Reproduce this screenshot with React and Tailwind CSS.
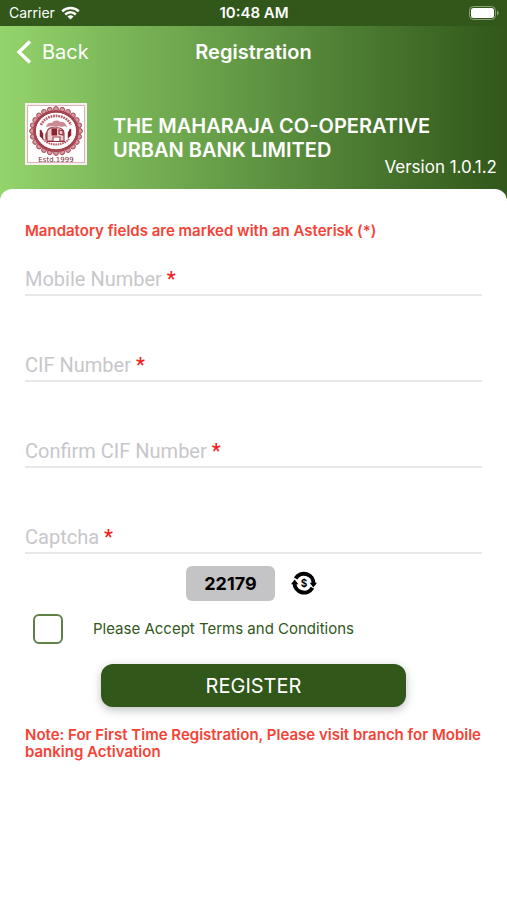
import React, { useState } from 'react';

const fields = [
  { id: 'mobile', label: 'Mobile Number', type: 'tel' },
  { id: 'cif', label: 'CIF Number', type: 'text' },
  { id: 'confirmCif', label: 'Confirm CIF Number', type: 'text' },
  { id: 'captcha', label: 'Captcha', type: 'text' },
];

const petals = Array.from({ length: 24 }, (_, i) => {
  const angle = (i * Math.PI) / 12;
  return { x: 31 + Math.cos(angle) * 24, y: 28 + Math.sin(angle) * 22 };
});

const StatusBar = () => (
  <div className="grid h-[26px] grid-cols-3 items-center bg-[#31571a] pr-2 pl-[9px] text-white">
    <div className="flex items-center gap-[6px]">
      <span className="text-sm">Carrier</span>
      <svg width="19" height="14" viewBox="0 0 19 14" fill="none" stroke="white" strokeWidth="2.5">
        <path d="M1.2 5.4a12 12 0 0 1 16.6 0" />
        <path d="M4.2 8.5a7.6 7.6 0 0 1 10.6 0" />
        <path d="M9.5 13.6l-3-3a4.2 4.2 0 0 1 6 0z" fill="white" stroke="none" />
      </svg>
    </div>
    <span className="text-center text-[15px] leading-5 font-semibold">10:48 AM</span>
    <svg className="justify-self-end" width="30" height="15" viewBox="0 0 30 15">
      <rect x="0.5" y="0.5" width="26" height="13" rx="4" fill="none" stroke="#8ba37c" />
      <rect x="2" y="2" width="23" height="10" rx="2.5" fill="white" />
      <path d="M28 4.7c2.2 1 2.2 3.8 0 4.8z" fill="#8ba37c" />
    </svg>
  </div>
);

const BankLogo = () => (
  <svg className="shrink-0" width="62" height="62" viewBox="0 0 62 62" role="img" aria-label="Bank logo">
    <rect width="62" height="62" fill="#f7eeee" />
    <rect x="2.5" y="2.5" width="57" height="57" fill="white" stroke="#d9b3b7" />
    {petals.map((p, i) => (
      <circle key={i} cx={p.x} cy={p.y} r="2.4" fill="#d49ba1" stroke="#a5444f" strokeWidth="1" />
    ))}
    <ellipse cx="31" cy="28" rx="21.4" ry="19.6" fill="white" stroke="#a5444f" strokeWidth="3" />
    <ellipse cx="31" cy="28" rx="20" ry="18.2" fill="white" />
    <path d="M16 22a16 14 0 0 1 30 0" fill="none" stroke="#b4606a" strokeWidth="2.6" strokeDasharray="1.8 0.8" />
    <path d="M18 36a15 11 0 0 0 26 0" fill="none" stroke="#b4606a" strokeWidth="2" strokeDasharray="1.6 0.7" />
    <path d="M21 24c1-4 4-5 6-4 2-3 6-3 8-1 3-1 6 1 7 5-2-1-4-1-5 0-2-1-4-1-6 0-3-1-7-1-10 0z" fill="#c98a91" />
    <path d="M22 38v-9c1-4 4-5 8-4 5-1 9 1 9 6v7h-4v-4h-7v4zM22 29c-2 2-1 5-1 8" fill="#ecd0d3" stroke="#a5444f" strokeWidth="1.2" />
    <rect x="26.5" y="25.5" width="5.5" height="7" fill="#8d2230" />
    <path d="M34 27l4 1v4l-4-1zM22 38.5h18" fill="none" stroke="#96303c" strokeWidth="1.2" />
    <path d="M15.5 27v6l2 2v-4zM45.5 26v6l-2 2v-4z" fill="#8d2230" stroke="#8d2230" strokeWidth="1.5" />
    <text x="31" y="59" textAnchor="middle" fontSize="7" fontFamily="DejaVu Sans, sans-serif" fill="#7d2f38">
      Estd.1999
    </text>
  </svg>
);

const RefreshIcon = () => (
  <svg width="26" height="26" viewBox="0 0 26 26">
    <g fill="none" stroke="black" strokeWidth="4">
      <path d="M4.6 7.6A9.6 9.6 0 0 1 22.5 13" />
      <path d="M21.4 16.8A9.6 9.6 0 0 1 3.5 12" />
    </g>
    <path d="M18.6 11.8H26l-3.6 4.8z" />
    <path d="M0 13.2h7.4L3.6 8.4z" />
    <text x="13" y="15.6" textAnchor="middle" fontSize="10" fontWeight="700">$</text>
  </svg>
);

const App = () => {
  const [values, setValues] = useState({});
  const [accepted, setAccepted] = useState(false);

  const handleChange = (e) => {
    setValues({ ...values, [e.target.name]: e.target.value });
  };

  return (
    <div className="flex min-h-screen flex-col bg-white font-[Inter,sans-serif]">
      <StatusBar />

      <header className="bg-linear-to-r from-[#94d46c] via-[#609643] to-[#31571a] text-white">
        <div className="grid grid-cols-3 items-center px-4 pt-3">
          <button type="button" className="flex items-center gap-[10px] text-xl">
            <svg width="16" height="24" viewBox="0 0 16 24" fill="none" stroke="white" strokeWidth="3.4">
              <path d="M14 1.5L3 12l11 10.5" />
            </svg>
            Back
          </button>
          <h1 className="text-center text-xl font-semibold">Registration</h1>
        </div>

        <div className="flex items-center gap-[26px] px-[25px] pt-[37px]">
          <BankLogo />
          <h2 className="flex flex-col items-start pt-2 text-xl leading-6 font-semibold">
            <span>THE MAHARAJA CO-OPERATIVE</span> <span>URBAN BANK LIMITED</span>
          </h2>
        </div>
        <p className="-mt-[10px] pr-[10px] pb-[22px] text-right text-[17px] leading-6">Version 1.0.1.2</p>
      </header>

      <main className="-mt-3 flex-1 rounded-t-xl bg-white px-[25px] pt-8">
        <p className="text-[15px] leading-5 font-semibold text-[#f44336]">
          Mandatory fields are marked with an Asterisk (*)
        </p>

        <form onSubmit={(e) => e.preventDefault()}>
          <div className="flex flex-col gap-[50px] pt-[19px]">
            {fields.map((field) => (
              <div key={field.id} className="flex h-9 items-center gap-2 border-b-2 border-[#e8e8e8] pt-[3px]">
                <label htmlFor={field.id} className="font-[Roboto,sans-serif] text-xl text-[#c7c7cb]">
                  {field.label} <span className="font-medium text-[#f21c1c]">*</span>
                </label>
                <input
                  id={field.id}
                  name={field.id}
                  type={field.type}
                  value={values[field.id] || ''}
                  onChange={handleChange}
                  className="min-w-0 flex-1 bg-transparent text-lg text-black outline-none"
                />
              </div>
            ))}
          </div>

          <div className="flex items-center justify-center gap-4 pt-3 pr-1">
            <span className="h-[35px] rounded-md bg-[#c4c4c6] px-[18px] text-lg leading-[35px] font-bold text-black">
              22179
            </span>
            <button type="button" aria-label="Refresh captcha">
              <RefreshIcon />
            </button>
          </div>

          <label className="flex items-center gap-[30px] px-2 pt-[13px] text-[15px] leading-5 text-[#31571a]">
            <input
              type="checkbox"
              checked={accepted}
              onChange={(e) => setAccepted(e.target.checked)}
              className="size-[30px] appearance-none rounded-md border-2 border-[#5f8149] checked:bg-[#31571a]"
            />
            Please Accept Terms and Conditions
          </label>

          <button
            type="submit"
            className="mx-auto mt-5 block h-[43px] w-2/3 rounded-xl bg-[#31571a] text-xl text-white shadow-[0_3px_10px_rgba(0,0,0,0.25)]"
          >
            REGISTER
          </button>
        </form>

        <p className="pt-[19px] text-[15px] leading-[17px] font-semibold text-[#f44336]">
          Note: For First Time Registration, Please visit branch for Mobile banking Activation
        </p>
      </main>
    </div>
  );
};

export default App;
